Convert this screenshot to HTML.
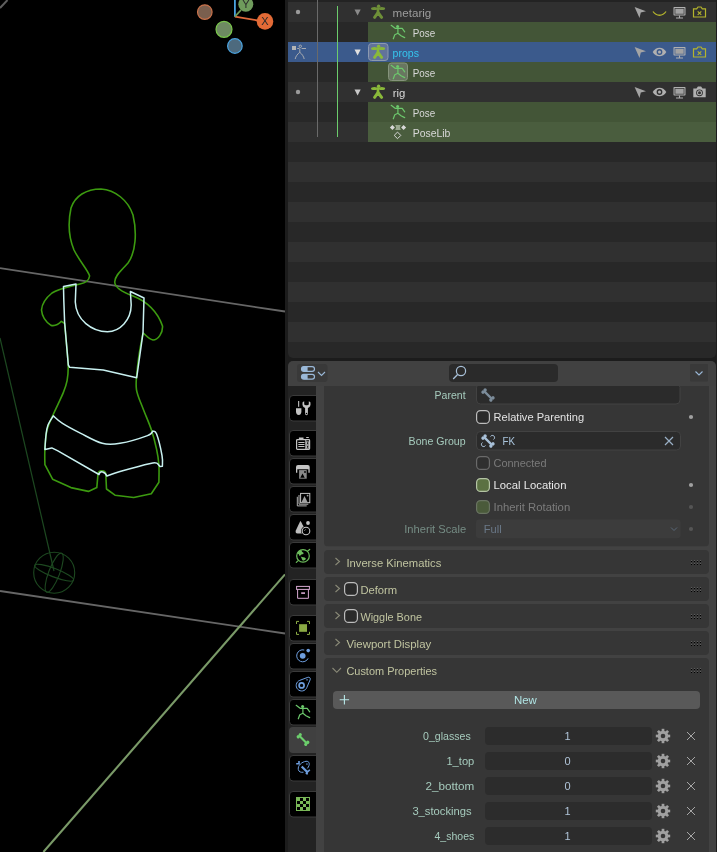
<!DOCTYPE html>
<html><head><meta charset="utf-8">
<style>
*{margin:0;padding:0}
html,body{width:717px;height:852px;overflow:hidden;background:#1c1c1c}
svg{position:absolute;left:0;top:0;font-family:"Liberation Sans",sans-serif;will-change:transform}
</style></head><body>
<svg width="717" height="852" viewBox="0 0 717 852">

<rect x="0" y="0" width="285" height="852" fill="#000"/>
<line x1="0" y1="8" x2="7.5" y2="0" stroke="#5e5e5e" stroke-width="2"/>
<line x1="0" y1="268.2" x2="285" y2="311.5" stroke="#666666" stroke-width="1.8"/>
<line x1="0" y1="591" x2="285" y2="633.5" stroke="#666666" stroke-width="1.8"/>
<line x1="43.4" y1="852" x2="285" y2="574.4" stroke="#7a9a68" stroke-width="2.1"/>
<line x1="0" y1="338" x2="54" y2="571" stroke="#1d4820" stroke-width="1.2"/>
<g fill="none" stroke="#1d4820" stroke-width="1.1">
 <circle cx="54.2" cy="572.7" r="20.5"/>
 <ellipse cx="54.2" cy="572.7" rx="20.8" ry="4.2" transform="rotate(21 54.2 572.7)"/>
 <ellipse cx="54.2" cy="572.7" rx="5.5" ry="20.8" transform="rotate(21 54.2 572.7)"/>
</g>
<path fill="none" stroke="#3c9a10" stroke-width="1.6" stroke-linejoin="round" d="M101,189 C115,190 128,200 133,215 C137,232 136,252 128,263 C122,270 115,275 114.7,282 C115,288 122,292 133,296 C148,302 158,313 162.5,326 C163,333 158,340 153,340 C148,339 145,334 143,333 C142.42,336.17 140.50,345.50 139.5,352 C138.50,358.50 137.50,365.70 137,372 C136.50,378.30 135.52,383.77 136.5,389.8 C137.48,395.83 140.43,401.58 142.9,408.2 C145.37,414.82 149.02,422.63 151.3,429.5 C153.58,436.37 155.33,443.53 156.6,449.4 C157.87,455.27 158.52,459.23 158.9,464.7 C159.28,470.17 158.90,479.28 158.9,482.2 L151.3,493.7 L133.7,497.5 L115,495.2 L106.5,489 L105.8,474 C105.5,470 98.5,469.5 98,474 L96.8,487.6 L88.4,491.4 L70.9,487.6 L52.6,479.2 L44.9,464.7 C44.90,462.15 44.55,455.18 44.9,449.4 C45.25,443.62 45.60,435.85 47,430 C48.40,424.15 50.60,420.48 53.3,414.3 C56.00,408.12 60.90,398.50 63.2,392.9 C65.50,387.30 66.27,385.18 67.1,380.7 C67.93,376.22 68.30,372.12 68.2,366 C68.10,359.88 67.10,351.08 66.5,344 C65.90,336.92 64.92,326.92 64.6,323.5 L61.4,321.3 C58,325 54,326 51,325.4 C46,322 42,316 41.5,310 C42,303 47,297 52,293 C58,289 68,287 80,284 C86,283 89,280 89.6,276 C88,270 80,262 74,250 C69,238 68,222 71,208 C75,196 86,189 101,189 Z"/>
<path fill="none" stroke="#c8f0f0" stroke-width="1.5" stroke-linejoin="round" d="M63.5,286.5 L63.8,300 L64.6,322 L68.3,365 L69.7,367.3 L103.2,370 L136.7,377.7 L143,332.8 L144,298 L130.4,291.5 L131.2,305 C131,320 120,331.7 107.4,331.7 C92,331.7 76,320 75.3,302 L76,284 Z"/>
<path fill="none" stroke="#c8f0f0" stroke-width="1.5" stroke-linejoin="round" d="M53.3,415.8 C54.83,417.07 57.92,420.47 62.5,423.4 C67.08,426.33 74.18,430.08 80.8,433.4 C87.42,436.72 95.67,441.65 102.2,443.3 C108.73,444.95 112.45,444.58 120,443.3 C127.55,442.02 142.03,437.63 147.5,435.6 C152.97,433.57 151.92,431.85 152.8,431.1 C153.43,431.60 155.07,430.03 156.6,434.1 C158.13,438.17 161.03,450.15 162,455.5 C162.97,460.85 162.33,464.42 162.4,466.2 L160,466.5 L157.4,463.4 C156.25,463.40 156.73,462.05 150.5,463.4 C144.27,464.75 127.28,469.38 120,471.5 C112.72,473.62 109.00,475.33 106.8,476.1 C105,471 100,470.5 99,474.5 L57.9,450.9 L51.8,447.9 L44.9,449.4 C45.08,447.00 45.48,439.07 46,435 C46.52,430.93 46.78,428.20 48,425 C49.22,421.80 52.42,417.33 53.3,415.8 Z"/>
<line x1="234.9" y1="16.7" x2="234.9" y2="0" stroke="#4aa3df" stroke-width="1.8"/>
<line x1="234.9" y1="16.7" x2="258" y2="20.5" stroke="#e0693a" stroke-width="1.8"/>
<line x1="234.9" y1="16.7" x2="241" y2="10" stroke="#6f9b55" stroke-width="1.8"/>
<circle cx="204.8" cy="12.1" r="7.3" fill="#7a5f4e" stroke="#c9714a" stroke-width="1.2"/>
<circle cx="224" cy="29.3" r="8" fill="#6e8a62" stroke="#7ac64c" stroke-width="1.2"/>
<circle cx="234.9" cy="46" r="7.3" fill="#4d6a7e" stroke="#4aa3df" stroke-width="1.2"/>
<circle cx="245.8" cy="4.2" r="7.5" fill="#6f9b5c"/>
<circle cx="265" cy="21.4" r="8.3" fill="#e26a36"/>
<text x="245.8" y="8" font-size="11" fill="#2a2a2a" text-anchor="middle">Y</text>
<text x="265" y="25.4" font-size="11" fill="#2a2a2a" text-anchor="middle">X</text>

<rect x="285" y="0" width="432" height="852" fill="#1c1c1c"/>
<clipPath id="olc"><rect x="288" y="0" width="428" height="358" rx="5"/><rect x="288" y="0" width="428" height="20"/></clipPath>
<g clip-path="url(#olc)">
<rect x="288" y="0" width="429" height="2" fill="#232323"/>
<rect x="288" y="2" width="429" height="20" fill="#303030"/>
<rect x="288" y="22" width="429" height="20" fill="#282828"/>
<rect x="288" y="42" width="429" height="20" fill="#303030"/>
<rect x="288" y="62" width="429" height="20" fill="#282828"/>
<rect x="288" y="82" width="429" height="20" fill="#303030"/>
<rect x="288" y="102" width="429" height="20" fill="#282828"/>
<rect x="288" y="122" width="429" height="20" fill="#303030"/>
<rect x="288" y="142" width="429" height="20" fill="#282828"/>
<rect x="288" y="162" width="429" height="20" fill="#303030"/>
<rect x="288" y="182" width="429" height="20" fill="#282828"/>
<rect x="288" y="202" width="429" height="20" fill="#303030"/>
<rect x="288" y="222" width="429" height="20" fill="#282828"/>
<rect x="288" y="242" width="429" height="20" fill="#303030"/>
<rect x="288" y="262" width="429" height="20" fill="#282828"/>
<rect x="288" y="282" width="429" height="20" fill="#303030"/>
<rect x="288" y="302" width="429" height="20" fill="#282828"/>
<rect x="288" y="322" width="429" height="20" fill="#303030"/>
<rect x="288" y="342" width="429" height="20" fill="#282828"/>
</g>
<rect x="288" y="42" width="429" height="20" fill="#3b5a8c"/>
<rect x="368" y="22" width="349" height="20" fill="#435537"/>
<rect x="368" y="62" width="349" height="20" fill="#435537"/>
<rect x="368" y="102" width="349" height="20" fill="#435537"/>
<rect x="368" y="122" width="349" height="20" fill="#4a5d3e"/>
<rect x="317" y="0" width="1" height="137" fill="#6a6a6a"/>
<rect x="337" y="6" width="1" height="131" fill="#6ccc6c"/>
<circle cx="298" cy="12" r="2.2" fill="#9a9a9a"/>
<circle cx="298" cy="92" r="2.2" fill="#9a9a9a"/>
<g fill="none" stroke="#b4b4b4" stroke-width="0.9"><rect x="292" y="46" width="4" height="4" fill="#b4b4b4" stroke="none"/><circle cx="300.3" cy="46.3" r="1.2"/><path d="M297.2,48.5 H299.2 M301.6,48.5 H306 M299.8,48.6 V52.3 M299.8,52.3 C297.5,54 295.6,56.5 295.2,59 M299.8,52.3 C302,54 303.7,56.5 304.2,59"/></g>
<path d="M354.5,9.6 L360.7,9.6 L357.6,15.6 Z" fill="#8a8a8a"/>
<path d="M354.5,49.6 L360.7,49.6 L357.6,55.6 Z" fill="#e0e0e0"/>
<path d="M354.5,89.6 L360.7,89.6 L357.6,95.6 Z" fill="#c8c8c8"/>
<rect x="368.5" y="43.5" width="19.5" height="17" rx="3" fill="#62739a" stroke="#8c9ab0" stroke-width="1"/>
<g opacity="1" fill="#8ab93a" stroke="#8ab93a" stroke-linecap="round"><circle cx="378.6" cy="46.2" r="1.7" stroke="none"/><ellipse cx="374.4" cy="48.5" rx="3.4" ry="1.6" stroke="none"/><ellipse cx="381.8" cy="48.5" rx="3.3" ry="1.5" stroke="none"/><path d="M378,48.5 L378,53" stroke-width="2.6"/><path d="M378,52.5 L374.6,57.3 M378,52.5 L381.6,57.3" stroke-width="3"/></g>
<g fill="#6e8f38" stroke="#6e8f38" stroke-linecap="round"><circle cx="378.6" cy="6.2" r="1.7" stroke="none"/><ellipse cx="374.4" cy="8.5" rx="3.4" ry="1.6" stroke="none"/><ellipse cx="381.8" cy="8.5" rx="3.3" ry="1.5" stroke="none"/><path d="M378,8.5 L378,13" stroke-width="2.6"/><path d="M378,12.5 L374.6,17.3 M378,12.5 L381.6,17.3" stroke-width="3"/></g>
<g fill="#8ab93a" stroke="#8ab93a" stroke-linecap="round"><circle cx="378.6" cy="86.2" r="1.7" stroke="none"/><ellipse cx="374.4" cy="88.5" rx="3.4" ry="1.6" stroke="none"/><ellipse cx="381.8" cy="88.5" rx="3.3" ry="1.5" stroke="none"/><path d="M378,88.5 L378,93" stroke-width="2.6"/><path d="M378,92.5 L374.6,97.3 M378,92.5 L381.6,97.3" stroke-width="3"/></g>
<rect x="388.5" y="63" width="19" height="17.5" rx="3" fill="#687660" stroke="#86947c" stroke-width="1"/>
<g fill="none" stroke="#6cc86c" stroke-width="1.2" stroke-linecap="round" stroke-linejoin="round"><path d="M391.2,25.3 L395.4,28.4 L397.9,28.4 L402.2,28.4 L404.7,31.8 M397.9,28.4 L397.9,33.3 L394.8,34.8 L393.3,38.8 M397.9,33.3 L401.0,35.7 L404.7,37.6"/><circle cx="397.6" cy="26.400000000000006" r="1.5" fill="#6cc86c" stroke="none"/></g>
<g fill="none" stroke="#6cc86c" stroke-width="1.2" stroke-linecap="round" stroke-linejoin="round"><path d="M391.2,65.3 L395.4,68.4 L397.9,68.4 L402.2,68.4 L404.7,71.8 M397.9,68.4 L397.9,73.3 L394.8,74.8 L393.3,78.8 M397.9,73.3 L401.0,75.7 L404.7,77.6"/><circle cx="397.6" cy="66.4" r="1.5" fill="#6cc86c" stroke="none"/></g>
<g fill="none" stroke="#6cc86c" stroke-width="1.2" stroke-linecap="round" stroke-linejoin="round"><path d="M391.2,105.3 L395.4,108.4 L397.9,108.4 L402.2,108.4 L404.7,111.8 M397.9,108.4 L397.9,113.3 L394.8,114.8 L393.3,118.8 M397.9,113.3 L401.0,115.7 L404.7,117.6"/><circle cx="397.6" cy="106.4" r="1.5" fill="#6cc86c" stroke="none"/></g>
<g fill="#d8d8d8"><path d="M389.9,127.4 L392.4,124.9 L394.9,127.4 L392.4,129.9Z M401.1,127.4 L403.6,124.9 L406.1,127.4 L403.6,129.9Z"/><path d="M395.2,125 H400.8 L399.9,127.4 L400.8,129.9 H395.2 L396.1,127.4 Z" fill="#9aa890"/></g><path d="M397.5,132.1 L400.8,135.4 L397.5,138.7 L394.2,135.4Z" fill="none" stroke="#d8d8d8" stroke-width="1"/>
<text x="392.60" y="16.7" font-size="11.5" fill="#9c9c9c" textLength="38.70" lengthAdjust="spacingAndGlyphs" >metarig</text>
<text x="412.70" y="36.5" font-size="11.5" fill="#d8d8d8" textLength="22.51" lengthAdjust="spacingAndGlyphs" >Pose</text>
<text x="392.60" y="56.7" font-size="11.5" fill="#36c6ee" textLength="26.42" lengthAdjust="spacingAndGlyphs" >props</text>
<text x="412.70" y="76.5" font-size="11.5" fill="#d8d8d8" textLength="22.51" lengthAdjust="spacingAndGlyphs" >Pose</text>
<text x="392.70" y="96.7" font-size="11.5" fill="#d8d8d8" textLength="12.58" lengthAdjust="spacingAndGlyphs" >rig</text>
<text x="412.70" y="116.5" font-size="11.5" fill="#d8d8d8" textLength="22.51" lengthAdjust="spacingAndGlyphs" >Pose</text>
<text x="412.70" y="136.5" font-size="11.5" fill="#d8d8d8" textLength="37.71" lengthAdjust="spacingAndGlyphs" >PoseLib</text>
<path d="M634.6,7 L646,11.2 L640.8,12.6 L639.5,18 Z" fill="#a4a4a4"/>
<rect x="673.5" y="7" width="12" height="8.6" rx="0.8" fill="#b0b0b0"/><rect x="674.6" y="8.1" width="9.8" height="6.4" fill="#303030"/><rect x="675.3" y="8.8" width="8.4" height="5" fill="#a2a2a2"/><path d="M679.5,15.6 V17.6 M676.0,18 H683.0" stroke="#b0b0b0" stroke-width="1.1"/>
<path d="M634.6,47 L646,51.2 L640.8,52.6 L639.5,58 Z" fill="#a4a4a4"/>
<rect x="673.5" y="47" width="12" height="8.6" rx="0.8" fill="#b0b0b0"/><rect x="674.6" y="48.1" width="9.8" height="6.4" fill="#3b5a8c"/><rect x="675.3" y="48.8" width="8.4" height="5" fill="#a2a2a2"/><path d="M679.5,55.6 V57.6 M676.0,58 H683.0" stroke="#b0b0b0" stroke-width="1.1"/>
<path d="M634.6,87 L646,91.2 L640.8,92.6 L639.5,98 Z" fill="#a4a4a4"/>
<rect x="673.5" y="87" width="12" height="8.6" rx="0.8" fill="#b0b0b0"/><rect x="674.6" y="88.1" width="9.8" height="6.4" fill="#303030"/><rect x="675.3" y="88.8" width="8.4" height="5" fill="#a2a2a2"/><path d="M679.5,95.6 V97.6 M676.0,98 H683.0" stroke="#b0b0b0" stroke-width="1.1"/>
<path d="M653.0,11.5 C656.5,16.5 662.5,16.5 666.0,11.5" fill="none" stroke="#b4b42c" stroke-width="1.3"/>
<path d="M652.7,52 C656.0,46.2 663.0,46.2 666.3,52 C663.0,57.8 656.0,57.8 652.7,52 Z" fill="#b0b0b0"/><circle cx="659.5" cy="52" r="2.9" fill="#3b5a8c"/><circle cx="659.5" cy="52" r="1.5" fill="#b0b0b0"/>
<path d="M652.7,92 C656.0,86.2 663.0,86.2 666.3,92 C663.0,97.8 656.0,97.8 652.7,92 Z" fill="#b0b0b0"/><circle cx="659.5" cy="92" r="2.9" fill="#303030"/><circle cx="659.5" cy="92" r="1.5" fill="#b0b0b0"/>
<path d="M693.5,8.8 H696.7 L698.0,7 H701.0 L702.3,8.8 H705.5 V17 H693.5 Z" fill="none" stroke="#b4b42c" stroke-width="1.2"/><path d="M697.7,11.3 L701.3,14.9 M701.3,11.3 L697.7,14.9" stroke="#b4b42c" stroke-width="1.1"/>
<path d="M693.5,48.8 H696.7 L698.0,47 H701.0 L702.3,48.8 H705.5 V57 H693.5 Z" fill="none" stroke="#b4b42c" stroke-width="1.2"/><path d="M697.7,51.3 L701.3,54.9 M701.3,51.3 L697.7,54.9" stroke="#b4b42c" stroke-width="1.1"/>
<path d="M693.3,88.5 H696.5 L697.9,86.6 H701.1 L702.5,88.5 H705.7 V97.2 H693.3 Z" fill="#b0b0b0"/><circle cx="699.5" cy="92.8" r="3.4" fill="#303030"/><circle cx="699.5" cy="92.8" r="2.5" fill="#b0b0b0"/><circle cx="699.5" cy="92.8" r="1.5" fill="#303030"/>
<clipPath id="prc"><rect x="288" y="361" width="428" height="600" rx="5"/></clipPath>
<g clip-path="url(#prc)">
<rect x="288" y="361" width="429" height="491" fill="#232323"/>
<rect x="288" y="361" width="429" height="25" fill="#414141"/>
</g>
<rect x="297" y="364" width="30.5" height="18" rx="3" fill="#393939"/>
<rect x="301.5" y="366.6" width="13" height="4.8" rx="2.4" fill="none" stroke="#9ab8d8" stroke-width="1.2"/>
<path d="M303.9,366.6 H307.6 V371.40000000000003 H303.9 A2.4,2.4 0 0 1 303.9,366.6 Z" fill="#9ab8d8"/>
<rect x="301.5" y="374.4" width="13" height="4.8" rx="2.4" fill="none" stroke="#9ab8d8" stroke-width="1.2"/>
<path d="M303.9,374.4 H307.6 V379.2 H303.9 A2.4,2.4 0 0 1 303.9,374.4 Z" fill="#9ab8d8"/>
<path d="M318,372 L321.5,375.5 L325,372" fill="none" stroke="#9ab8d8" stroke-width="1.1"/>
<rect x="449" y="364" width="109" height="18" rx="4" fill="#2a2a2a"/>
<circle cx="461" cy="371" r="4.6" fill="none" stroke="#a8c0d8" stroke-width="1.2"/><path d="M457.6,374.5 L453.2,379" stroke="#a8c0d8" stroke-width="1.3"/>
<rect x="690" y="364" width="18" height="17.5" rx="1" fill="#393939"/>
<path d="M695.5,371.5 L699,375 L702.5,371.5" fill="none" stroke="#9ab8d8" stroke-width="1.1"/>
<rect x="289.5" y="395.5" width="31" height="25.5" rx="3.5" fill="#000" stroke="#3a3a3a" stroke-width="1"/>
<rect x="289.5" y="430.5" width="31" height="25.5" rx="3.5" fill="#000" stroke="#3a3a3a" stroke-width="1"/>
<rect x="289.5" y="458.5" width="31" height="25.5" rx="3.5" fill="#000" stroke="#3a3a3a" stroke-width="1"/>
<rect x="289.5" y="486.5" width="31" height="25.5" rx="3.5" fill="#000" stroke="#3a3a3a" stroke-width="1"/>
<rect x="289.5" y="514.5" width="31" height="25.5" rx="3.5" fill="#000" stroke="#3a3a3a" stroke-width="1"/>
<rect x="289.5" y="542.5" width="31" height="25.5" rx="3.5" fill="#000" stroke="#3a3a3a" stroke-width="1"/>
<rect x="289.5" y="579.5" width="31" height="25.5" rx="3.5" fill="#000" stroke="#3a3a3a" stroke-width="1"/>
<rect x="289.5" y="615.5" width="31" height="25.5" rx="3.5" fill="#000" stroke="#3a3a3a" stroke-width="1"/>
<rect x="289.5" y="643.5" width="31" height="25.5" rx="3.5" fill="#000" stroke="#3a3a3a" stroke-width="1"/>
<rect x="289.5" y="671.5" width="31" height="25.5" rx="3.5" fill="#000" stroke="#3a3a3a" stroke-width="1"/>
<rect x="289.5" y="699.5" width="31" height="25.5" rx="3.5" fill="#000" stroke="#3a3a3a" stroke-width="1"/>
<rect x="289" y="727" width="32" height="26" rx="4" fill="#404040"/>
<rect x="289.5" y="755.5" width="31" height="25.5" rx="3.5" fill="#000" stroke="#3a3a3a" stroke-width="1"/>
<rect x="289.5" y="791.5" width="31" height="25.5" rx="3.5" fill="#000" stroke="#3a3a3a" stroke-width="1"/>
<rect x="316" y="386" width="401" height="466" fill="#424242"/>
<rect x="298.1" y="401" width="1.1" height="5.8" fill="#c4c4c4"/>
<path d="M296,408.3 H301.4 V411.3 A2.7,3.6 0 0 1 296,411.3 Z" fill="#c4c4c4"/>
<path d="M302.6,402.2 C302,405.5 303.2,407.4 305.1,407.9 V413.8 A1.4,1.4 0 0 0 307.9,413.8 V407.9 C309.8,407.4 311,405.5 310.4,402.2 L308.8,401.2 V404.6 C308.2,405.6 304.8,405.6 304.2,404.6 V401.2 Z" fill="#c4c4c4"/>
<circle cx="306.5" cy="413.5" r="0.75" fill="#000"/>
<rect x="296.6" y="439.6" width="13" height="9.8" rx="0.8" fill="none" stroke="#c4c4c4" stroke-width="1.2"/>
<rect x="298.9" y="437.5" width="4.6" height="2.4" fill="#c4c4c4"/>
<rect x="298.3" y="442" width="6.2" height="1" fill="#c4c4c4"/><rect x="298.3" y="444" width="6.2" height="1" fill="#c4c4c4"/><rect x="298.3" y="446" width="6.2" height="1" fill="#c4c4c4"/>
<rect x="305.3" y="440" width="1" height="9" fill="#c4c4c4"/>
<rect x="306.4" y="441.9" width="2.4" height="2.4" fill="none" stroke="#c4c4c4" stroke-width="0.9"/><rect x="306.4" y="445.7" width="2.4" height="2.4" fill="none" stroke="#c4c4c4" stroke-width="0.9"/>
<rect x="306.2" y="437" width="2.6" height="1" fill="#c4c4c4"/>
<path d="M296,467 Q296,465.1 298,465.1 H307.7 Q309.7,465.1 309.7,467 V472.7 H308.4 V469.3 H297.3 V472.7 H296 Z" fill="#c4c4c4"/>
<rect x="299.1" y="470.1" width="7.6" height="8.6" fill="#8a8a8a"/>
<path d="M300.3,477.8 L302.5,473.5 L304.7,477.8 Z" fill="#000"/><circle cx="305" cy="472" r="0.9" fill="#000"/>
<rect x="300.6" y="493.4" width="9.2" height="9.3" fill="none" stroke="#c4c4c4" stroke-width="1"/>
<path d="M301.6,501.9 L304.5,496 L307.5,501.9 Z" fill="#a0a0a0"/><circle cx="307.6" cy="495.6" r="0.9" fill="#a0a0a0"/>
<path d="M299,495 V504.2 H308.3 M297.3,496.8 V505.9 H306.7" fill="none" stroke="#c4c4c4" stroke-width="0.9"/>
<path d="M300.3,521 C300.8,521 304.5,528 304.5,529 L302.5,533.5 L297.5,533.5 C296,533.5 295.2,532.2 295.8,530.5 Z" fill="#bcbcbc"/>
<circle cx="308" cy="523" r="1.9" fill="#c4c4c4"/>
<circle cx="306" cy="531" r="4.9" fill="#000"/><circle cx="306" cy="531" r="3.8" fill="none" stroke="#c4c4c4" stroke-width="1.1"/>
<path d="M304.5,530.6 L305.6,529.5" stroke="#c4c4c4" stroke-width="0.9"/>
<circle cx="303" cy="555.9" r="6.3" fill="none" stroke="#6cbc5c" stroke-width="1.2"/>
<path d="M297.5,552.7 L299.7,550.2 L301.7,550.5 L302,551.7 L303.5,552.7 L303.4,554 L301.4,554.4 L300.4,555.4 L299.2,555.7 L298.7,554 L297.4,554 Z" fill="#6cbc5c"/>
<path d="M300.7,556.4 L302,557 L304.7,557.4 L306,558.7 L305,560 L303,560.7 L302,559.4 L301.4,557.7 Z" fill="#6cbc5c"/>
<path d="M296.3,562.4 L298.2,560.6 M307.7,550.9 L309.7,549.4" stroke="#6cbc5c" stroke-width="1.2" stroke-linecap="round"/>
<rect x="296.6" y="586.4" width="12.8" height="3" fill="none" stroke="#d6a8d0" stroke-width="1"/>
<path d="M297.6,589.5 V598.3 H308.4 V589.5" fill="none" stroke="#d6a8d0" stroke-width="1"/>
<rect x="301.2" y="592.3" width="3.8" height="1.6" fill="#d6a8d0"/>
<rect x="299.1" y="624.2" width="7.9" height="7.6" fill="#8aaa44"/>
<path d="M296.5,624 V621.4 H299 M307,621.4 H309.5 V624 M309.5,631.8 V634.4 H307 M299,634.4 H296.5 V631.8" fill="none" stroke="#8aaa44" stroke-width="1"/>
<path d="M304.25,650.0 A6,6 0 1 0 308.14,658.34" fill="none" stroke="#6e9ede" stroke-width="1"/>
<circle cx="302.7" cy="655.8" r="2.9" fill="#6e9ede"/><circle cx="308.2" cy="650.6" r="1.8" fill="#6e9ede"/>
<path d="M299.77,680.35 L307.87,677.31 A1.8,1.8 0 0 1 310.16,679.71 L306.76,687.66 A5.5,5.5 0 1 1 299.77,680.35 Z" fill="none" stroke="#6e9ede" stroke-width="1"/>
<circle cx="301.6" cy="685.4" r="2.5" fill="none" stroke="#6e9ede" stroke-width="1.7"/><rect x="306.4" y="679.2" width="1.3" height="1.3" fill="#6e9ede"/>
<g fill="none" stroke="#6cc86c" stroke-width="1.2" stroke-linecap="round" stroke-linejoin="round"><path d="M296.2,705.3 L300.4,708.4 L302.9,708.4 L307.2,708.4 L309.7,711.8 M302.9,708.4 L302.9,713.3 L299.8,714.8 L298.3,718.8 M302.9,713.3 L306.0,715.7 L309.7,717.6"/><circle cx="302.6" cy="706.4" r="1.5" fill="#6cc86c" stroke="none"/></g>
<g transform="translate(303,739.5) rotate(-45) scale(0.95)"><rect x="-1.1" y="-5.5" width="2.2" height="11" fill="#6ccf6c"/><circle cx="-1.5" cy="-5.6" r="1.7" fill="#6ccf6c"/><circle cx="1.5" cy="-5.6" r="1.7" fill="#6ccf6c"/><circle cx="-1.5" cy="5.6" r="1.7" fill="#6ccf6c"/><circle cx="1.5" cy="5.6" r="1.7" fill="#6ccf6c"/></g>
<path d="M307.4,768.4 C310.5,764.5 309.5,760.8 306,761.3 C302,761.8 297.5,765.5 298.3,769.5 C298.8,772 301,772.6 303.5,772.2" fill="none" stroke="#6e9ede" stroke-width="1"/>
<path d="M301.7,766.5 L307.2,772" stroke="#6e9ede" stroke-width="2.3"/>
<path d="M305.8,773.8 L309.8,769.8 M306.5,770.5 L307.3,774.5" stroke="#6e9ede" stroke-width="1.6"/>
<path d="M296.2,763.8 H299 V761" fill="none" stroke="#6e9ede" stroke-width="1.6"/>
<rect x="306.3" y="763.4" width="1.3" height="1.3" fill="#6e9ede"/>
<rect x="296" y="797" width="14" height="14" fill="#7ab858"/>
<rect x="300" y="798" width="3" height="3" fill="#000"/>
<rect x="306" y="798" width="3" height="3" fill="#000"/>
<rect x="297" y="801" width="3" height="3" fill="#000"/>
<rect x="303" y="801" width="3" height="3" fill="#000"/>
<rect x="300" y="804" width="3" height="3" fill="#000"/>
<rect x="306" y="804" width="3" height="3" fill="#000"/>
<rect x="297" y="807" width="3" height="3" fill="#000"/>
<rect x="303" y="807" width="3" height="3" fill="#000"/>
<clipPath id="p1c"><rect x="324" y="300" width="385" height="246.5" rx="4"/></clipPath>
<rect x="324" y="386" width="385" height="160.5" fill="#363636" clip-path="url(#p1c)"/>
<rect x="324" y="550" width="385" height="24" rx="4" fill="#363636"/>
<rect x="324" y="577" width="385" height="24" rx="4" fill="#363636"/>
<rect x="324" y="604" width="385" height="24" rx="4" fill="#363636"/>
<rect x="324" y="631" width="385" height="24" rx="4" fill="#363636"/>
<rect x="324" y="658" width="385" height="220" rx="4" fill="#363636"/>
<text x="434.60" y="398.9" font-size="11.5" fill="#a6cbbd" textLength="30.98" lengthAdjust="spacingAndGlyphs" >Parent</text>
<text x="408.60" y="444.5" font-size="11.5" fill="#a6cbbd" textLength="57.02" lengthAdjust="spacingAndGlyphs" >Bone Group</text>
<text x="404.20" y="533.3" font-size="11.5" fill="#758c84" textLength="62.08" lengthAdjust="spacingAndGlyphs" >Inherit Scale</text>
<clipPath id="pfc"><rect x="400" y="386" width="300" height="30"/></clipPath>
<rect x="476.5" y="383.5" width="203.5" height="20.5" rx="4" fill="#2b2b2b" stroke="#424242" stroke-width="1" clip-path="url(#pfc)"/>
<rect x="476.5" y="431.5" width="204" height="18.5" rx="4" fill="#2b2b2b" stroke="#424242" stroke-width="1"/>
<rect x="476" y="519.5" width="204.5" height="18.7" rx="3" fill="#3c3c3c"/>
<rect x="476.6" y="410.6" width="12.8" height="12.8" rx="4" fill="#2a2a2a" stroke="#bdbdbd" stroke-width="1.2"/>
<rect x="476.6" y="456.6" width="12.8" height="12.8" rx="4" fill="#2f2f2f" stroke="#6a6a6a" stroke-width="1.2"/>
<rect x="476.6" y="478.6" width="12.8" height="12.8" rx="4" fill="#5b7142" stroke="#b4c4a4" stroke-width="1.2"/>
<rect x="476.6" y="500.6" width="12.8" height="12.8" rx="4" fill="#4a5a3a" stroke="#6a7462" stroke-width="1.2"/>
<text x="493.50" y="420.6" font-size="11.5" fill="#e2e2e2" textLength="90.62" lengthAdjust="spacingAndGlyphs" >Relative Parenting</text>
<text x="502.60" y="444.7" font-size="11.5" fill="#a8c4dc" textLength="12.50" lengthAdjust="spacingAndGlyphs" >FK</text>
<text x="493.50" y="467.1" font-size="11.5" fill="#7a7a7a" textLength="52.98" lengthAdjust="spacingAndGlyphs" >Connected</text>
<text x="493.50" y="488.8" font-size="11.5" fill="#e8e8e8" textLength="72.92" lengthAdjust="spacingAndGlyphs" >Local Location</text>
<text x="493.50" y="510.9" font-size="11.5" fill="#7c7c7c" textLength="76.69" lengthAdjust="spacingAndGlyphs" >Inherit Rotation</text>
<text x="483.80" y="533.3" font-size="11.5" fill="#6a7888" textLength="17.88" lengthAdjust="spacingAndGlyphs" >Full</text>
<path d="M671,527.5 L674,530.5 L677,527.5" fill="none" stroke="#5a6878" stroke-width="1"/>
<g transform="translate(488,395) rotate(-45) scale(1.0)"><rect x="-1.1" y="-5.5" width="2.2" height="11" fill="#7c8c9a"/><circle cx="-1.5" cy="-5.6" r="1.7" fill="#7c8c9a"/><circle cx="1.5" cy="-5.6" r="1.7" fill="#7c8c9a"/><circle cx="-1.5" cy="5.6" r="1.7" fill="#7c8c9a"/><circle cx="1.5" cy="5.6" r="1.7" fill="#7c8c9a"/></g>
<g transform="translate(488,441) rotate(-45) scale(1.0)"><rect x="-1.1" y="-5.5" width="2.2" height="11" fill="#a8c0d8"/><circle cx="-1.5" cy="-5.6" r="1.7" fill="#a8c0d8"/><circle cx="1.5" cy="-5.6" r="1.7" fill="#a8c0d8"/><circle cx="-1.5" cy="5.6" r="1.7" fill="#a8c0d8"/><circle cx="1.5" cy="5.6" r="1.7" fill="#a8c0d8"/></g>
<path d="M490.5,436.5 A2.2,2.2 0 1 1 493.5,439.5" fill="none" stroke="#a8c0d8" stroke-width="1"/><path d="M485.5,445.5 A2.2,2.2 0 1 1 482.5,442.5" fill="none" stroke="#a8c0d8" stroke-width="1"/>
<path d="M665,437 L673,445 M673,437 L665,445" stroke="#9ab0c6" stroke-width="1.2"/>
<circle cx="691" cy="417" r="2.1" fill="#a0a0a0"/>
<circle cx="691" cy="485" r="2.1" fill="#a0a0a0"/>
<circle cx="691" cy="507" r="2.1" fill="#555555"/>
<circle cx="691" cy="529" r="2.1" fill="#555555"/>
<path d="M335.5,558.0 L339.5,561.5 L335.5,565.0" fill="none" stroke="#8a8a78" stroke-width="1.1"/>
<path d="M335.5,585.0 L339.5,588.5 L335.5,592.0" fill="none" stroke="#8a8a78" stroke-width="1.1"/>
<path d="M335.5,612.0 L339.5,615.5 L335.5,619.0" fill="none" stroke="#8a8a78" stroke-width="1.1"/>
<path d="M335.5,639.0 L339.5,642.5 L335.5,646.0" fill="none" stroke="#8a8a78" stroke-width="1.1"/>
<path d="M332.5,668 L336.8,672.3 L341,668" fill="none" stroke="#8a8a78" stroke-width="1.1"/>
<text x="346.40" y="566.7" font-size="11.5" fill="#c0c4a0" textLength="94.90" lengthAdjust="spacingAndGlyphs" >Inverse Kinematics</text>
<rect x="344.6" y="582.6" width="12.8" height="12.8" rx="4" fill="#2a2a2a" stroke="#bdbdbd" stroke-width="1.2"/>
<text x="360.40" y="593.8" font-size="11.5" fill="#c0c4a0" textLength="36.80" lengthAdjust="spacingAndGlyphs" >Deform</text>
<rect x="344.6" y="609.6" width="12.8" height="12.8" rx="4" fill="#2a2a2a" stroke="#bdbdbd" stroke-width="1.2"/>
<text x="360.40" y="620.6" font-size="11.5" fill="#c0c4a0" textLength="61.61" lengthAdjust="spacingAndGlyphs" >Wiggle Bone</text>
<text x="346.40" y="647.6" font-size="11.5" fill="#c0c4a0" textLength="84.79" lengthAdjust="spacingAndGlyphs" >Viewport Display</text>
<text x="346.40" y="675.3" font-size="11.5" fill="#c0c4a0" textLength="90.68" lengthAdjust="spacingAndGlyphs" >Custom Properties</text>
<rect x="691" y="560" width="1" height="1" fill="#5c5c5c"/>
<rect x="691" y="561" width="1" height="1" fill="#000"/>
<rect x="694" y="560" width="1" height="1" fill="#5c5c5c"/>
<rect x="694" y="561" width="1" height="1" fill="#000"/>
<rect x="697" y="560" width="1" height="1" fill="#5c5c5c"/>
<rect x="697" y="561" width="1" height="1" fill="#000"/>
<rect x="700" y="560" width="1" height="1" fill="#5c5c5c"/>
<rect x="700" y="561" width="1" height="1" fill="#000"/>
<rect x="691" y="563" width="1" height="1" fill="#5c5c5c"/>
<rect x="691" y="564" width="1" height="1" fill="#000"/>
<rect x="694" y="563" width="1" height="1" fill="#5c5c5c"/>
<rect x="694" y="564" width="1" height="1" fill="#000"/>
<rect x="697" y="563" width="1" height="1" fill="#5c5c5c"/>
<rect x="697" y="564" width="1" height="1" fill="#000"/>
<rect x="700" y="563" width="1" height="1" fill="#5c5c5c"/>
<rect x="700" y="564" width="1" height="1" fill="#000"/>
<rect x="691" y="587" width="1" height="1" fill="#5c5c5c"/>
<rect x="691" y="588" width="1" height="1" fill="#000"/>
<rect x="694" y="587" width="1" height="1" fill="#5c5c5c"/>
<rect x="694" y="588" width="1" height="1" fill="#000"/>
<rect x="697" y="587" width="1" height="1" fill="#5c5c5c"/>
<rect x="697" y="588" width="1" height="1" fill="#000"/>
<rect x="700" y="587" width="1" height="1" fill="#5c5c5c"/>
<rect x="700" y="588" width="1" height="1" fill="#000"/>
<rect x="691" y="590" width="1" height="1" fill="#5c5c5c"/>
<rect x="691" y="591" width="1" height="1" fill="#000"/>
<rect x="694" y="590" width="1" height="1" fill="#5c5c5c"/>
<rect x="694" y="591" width="1" height="1" fill="#000"/>
<rect x="697" y="590" width="1" height="1" fill="#5c5c5c"/>
<rect x="697" y="591" width="1" height="1" fill="#000"/>
<rect x="700" y="590" width="1" height="1" fill="#5c5c5c"/>
<rect x="700" y="591" width="1" height="1" fill="#000"/>
<rect x="691" y="614" width="1" height="1" fill="#5c5c5c"/>
<rect x="691" y="615" width="1" height="1" fill="#000"/>
<rect x="694" y="614" width="1" height="1" fill="#5c5c5c"/>
<rect x="694" y="615" width="1" height="1" fill="#000"/>
<rect x="697" y="614" width="1" height="1" fill="#5c5c5c"/>
<rect x="697" y="615" width="1" height="1" fill="#000"/>
<rect x="700" y="614" width="1" height="1" fill="#5c5c5c"/>
<rect x="700" y="615" width="1" height="1" fill="#000"/>
<rect x="691" y="617" width="1" height="1" fill="#5c5c5c"/>
<rect x="691" y="618" width="1" height="1" fill="#000"/>
<rect x="694" y="617" width="1" height="1" fill="#5c5c5c"/>
<rect x="694" y="618" width="1" height="1" fill="#000"/>
<rect x="697" y="617" width="1" height="1" fill="#5c5c5c"/>
<rect x="697" y="618" width="1" height="1" fill="#000"/>
<rect x="700" y="617" width="1" height="1" fill="#5c5c5c"/>
<rect x="700" y="618" width="1" height="1" fill="#000"/>
<rect x="691" y="641" width="1" height="1" fill="#5c5c5c"/>
<rect x="691" y="642" width="1" height="1" fill="#000"/>
<rect x="694" y="641" width="1" height="1" fill="#5c5c5c"/>
<rect x="694" y="642" width="1" height="1" fill="#000"/>
<rect x="697" y="641" width="1" height="1" fill="#5c5c5c"/>
<rect x="697" y="642" width="1" height="1" fill="#000"/>
<rect x="700" y="641" width="1" height="1" fill="#5c5c5c"/>
<rect x="700" y="642" width="1" height="1" fill="#000"/>
<rect x="691" y="644" width="1" height="1" fill="#5c5c5c"/>
<rect x="691" y="645" width="1" height="1" fill="#000"/>
<rect x="694" y="644" width="1" height="1" fill="#5c5c5c"/>
<rect x="694" y="645" width="1" height="1" fill="#000"/>
<rect x="697" y="644" width="1" height="1" fill="#5c5c5c"/>
<rect x="697" y="645" width="1" height="1" fill="#000"/>
<rect x="700" y="644" width="1" height="1" fill="#5c5c5c"/>
<rect x="700" y="645" width="1" height="1" fill="#000"/>
<rect x="691" y="668" width="1" height="1" fill="#5c5c5c"/>
<rect x="691" y="669" width="1" height="1" fill="#000"/>
<rect x="694" y="668" width="1" height="1" fill="#5c5c5c"/>
<rect x="694" y="669" width="1" height="1" fill="#000"/>
<rect x="697" y="668" width="1" height="1" fill="#5c5c5c"/>
<rect x="697" y="669" width="1" height="1" fill="#000"/>
<rect x="700" y="668" width="1" height="1" fill="#5c5c5c"/>
<rect x="700" y="669" width="1" height="1" fill="#000"/>
<rect x="691" y="671" width="1" height="1" fill="#5c5c5c"/>
<rect x="691" y="672" width="1" height="1" fill="#000"/>
<rect x="694" y="671" width="1" height="1" fill="#5c5c5c"/>
<rect x="694" y="672" width="1" height="1" fill="#000"/>
<rect x="697" y="671" width="1" height="1" fill="#5c5c5c"/>
<rect x="697" y="672" width="1" height="1" fill="#000"/>
<rect x="700" y="671" width="1" height="1" fill="#5c5c5c"/>
<rect x="700" y="672" width="1" height="1" fill="#000"/>
<rect x="333" y="691" width="367" height="18" rx="4" fill="#595959"/>
<path d="M344.4,695 V704.4 M339.7,699.7 H349.1" stroke="#b8e8e8" stroke-width="1.1"/>
<text x="514.00" y="704.1" font-size="11.5" fill="#b0e4e4" textLength="22.86" lengthAdjust="spacingAndGlyphs" >New</text>
<text x="423.00" y="739.8" font-size="11.5" fill="#a6cbbd" textLength="47.69" lengthAdjust="spacingAndGlyphs" >0_glasses</text>
<rect x="485" y="727" width="167" height="18" rx="4" fill="#2c2c2c"/>
<text x="567.5" y="739.8" font-size="11" fill="#b0c4d8" text-anchor="middle" >1</text>
<g transform="translate(663,736)" fill="#a0a0a0"><circle r="5.3"/><rect x="-1.35" y="-7.2" width="2.7" height="3" transform="rotate(0)"/><rect x="-1.35" y="-7.2" width="2.7" height="3" transform="rotate(45)"/><rect x="-1.35" y="-7.2" width="2.7" height="3" transform="rotate(90)"/><rect x="-1.35" y="-7.2" width="2.7" height="3" transform="rotate(135)"/><rect x="-1.35" y="-7.2" width="2.7" height="3" transform="rotate(180)"/><rect x="-1.35" y="-7.2" width="2.7" height="3" transform="rotate(225)"/><rect x="-1.35" y="-7.2" width="2.7" height="3" transform="rotate(270)"/><rect x="-1.35" y="-7.2" width="2.7" height="3" transform="rotate(315)"/><circle r="2.3" fill="#363636"/></g>
<path d="M687,732 L695,740 M695,732 L687,740" stroke="#b4b4b4" stroke-width="0.9"/>
<text x="446.40" y="764.8" font-size="11.5" fill="#a6cbbd" textLength="27.88" lengthAdjust="spacingAndGlyphs" >1_top</text>
<rect x="485" y="752" width="167" height="18" rx="4" fill="#2c2c2c"/>
<text x="567.5" y="764.8" font-size="11" fill="#b0c4d8" text-anchor="middle" >0</text>
<g transform="translate(663,761)" fill="#a0a0a0"><circle r="5.3"/><rect x="-1.35" y="-7.2" width="2.7" height="3" transform="rotate(0)"/><rect x="-1.35" y="-7.2" width="2.7" height="3" transform="rotate(45)"/><rect x="-1.35" y="-7.2" width="2.7" height="3" transform="rotate(90)"/><rect x="-1.35" y="-7.2" width="2.7" height="3" transform="rotate(135)"/><rect x="-1.35" y="-7.2" width="2.7" height="3" transform="rotate(180)"/><rect x="-1.35" y="-7.2" width="2.7" height="3" transform="rotate(225)"/><rect x="-1.35" y="-7.2" width="2.7" height="3" transform="rotate(270)"/><rect x="-1.35" y="-7.2" width="2.7" height="3" transform="rotate(315)"/><circle r="2.3" fill="#363636"/></g>
<path d="M687,757 L695,765 M695,757 L687,765" stroke="#b4b4b4" stroke-width="0.9"/>
<text x="425.60" y="789.8" font-size="11.5" fill="#a6cbbd" textLength="48.70" lengthAdjust="spacingAndGlyphs" >2_bottom</text>
<rect x="485" y="777" width="167" height="18" rx="4" fill="#2c2c2c"/>
<text x="567.5" y="789.8" font-size="11" fill="#b0c4d8" text-anchor="middle" >0</text>
<g transform="translate(663,786)" fill="#a0a0a0"><circle r="5.3"/><rect x="-1.35" y="-7.2" width="2.7" height="3" transform="rotate(0)"/><rect x="-1.35" y="-7.2" width="2.7" height="3" transform="rotate(45)"/><rect x="-1.35" y="-7.2" width="2.7" height="3" transform="rotate(90)"/><rect x="-1.35" y="-7.2" width="2.7" height="3" transform="rotate(135)"/><rect x="-1.35" y="-7.2" width="2.7" height="3" transform="rotate(180)"/><rect x="-1.35" y="-7.2" width="2.7" height="3" transform="rotate(225)"/><rect x="-1.35" y="-7.2" width="2.7" height="3" transform="rotate(270)"/><rect x="-1.35" y="-7.2" width="2.7" height="3" transform="rotate(315)"/><circle r="2.3" fill="#363636"/></g>
<path d="M687,782 L695,790 M695,782 L687,790" stroke="#b4b4b4" stroke-width="0.9"/>
<text x="412.40" y="814.8" font-size="11.5" fill="#a6cbbd" textLength="59.18" lengthAdjust="spacingAndGlyphs" >3_stockings</text>
<rect x="485" y="802" width="167" height="18" rx="4" fill="#2c2c2c"/>
<text x="567.5" y="814.8" font-size="11" fill="#b0c4d8" text-anchor="middle" >1</text>
<g transform="translate(663,811)" fill="#a0a0a0"><circle r="5.3"/><rect x="-1.35" y="-7.2" width="2.7" height="3" transform="rotate(0)"/><rect x="-1.35" y="-7.2" width="2.7" height="3" transform="rotate(45)"/><rect x="-1.35" y="-7.2" width="2.7" height="3" transform="rotate(90)"/><rect x="-1.35" y="-7.2" width="2.7" height="3" transform="rotate(135)"/><rect x="-1.35" y="-7.2" width="2.7" height="3" transform="rotate(180)"/><rect x="-1.35" y="-7.2" width="2.7" height="3" transform="rotate(225)"/><rect x="-1.35" y="-7.2" width="2.7" height="3" transform="rotate(270)"/><rect x="-1.35" y="-7.2" width="2.7" height="3" transform="rotate(315)"/><circle r="2.3" fill="#363636"/></g>
<path d="M687,807 L695,815 M695,807 L687,815" stroke="#b4b4b4" stroke-width="0.9"/>
<text x="434.50" y="839.8" font-size="11.5" fill="#a6cbbd" textLength="39.78" lengthAdjust="spacingAndGlyphs" >4_shoes</text>
<rect x="485" y="827" width="167" height="18" rx="4" fill="#2c2c2c"/>
<text x="567.5" y="839.8" font-size="11" fill="#b0c4d8" text-anchor="middle" >1</text>
<g transform="translate(663,836)" fill="#a0a0a0"><circle r="5.3"/><rect x="-1.35" y="-7.2" width="2.7" height="3" transform="rotate(0)"/><rect x="-1.35" y="-7.2" width="2.7" height="3" transform="rotate(45)"/><rect x="-1.35" y="-7.2" width="2.7" height="3" transform="rotate(90)"/><rect x="-1.35" y="-7.2" width="2.7" height="3" transform="rotate(135)"/><rect x="-1.35" y="-7.2" width="2.7" height="3" transform="rotate(180)"/><rect x="-1.35" y="-7.2" width="2.7" height="3" transform="rotate(225)"/><rect x="-1.35" y="-7.2" width="2.7" height="3" transform="rotate(270)"/><rect x="-1.35" y="-7.2" width="2.7" height="3" transform="rotate(315)"/><circle r="2.3" fill="#363636"/></g>
<path d="M687,832 L695,840 M695,832 L687,840" stroke="#b4b4b4" stroke-width="0.9"/>
<rect x="716" y="0" width="1" height="852" fill="#1c1c1c"/>
</svg>
</body></html>
